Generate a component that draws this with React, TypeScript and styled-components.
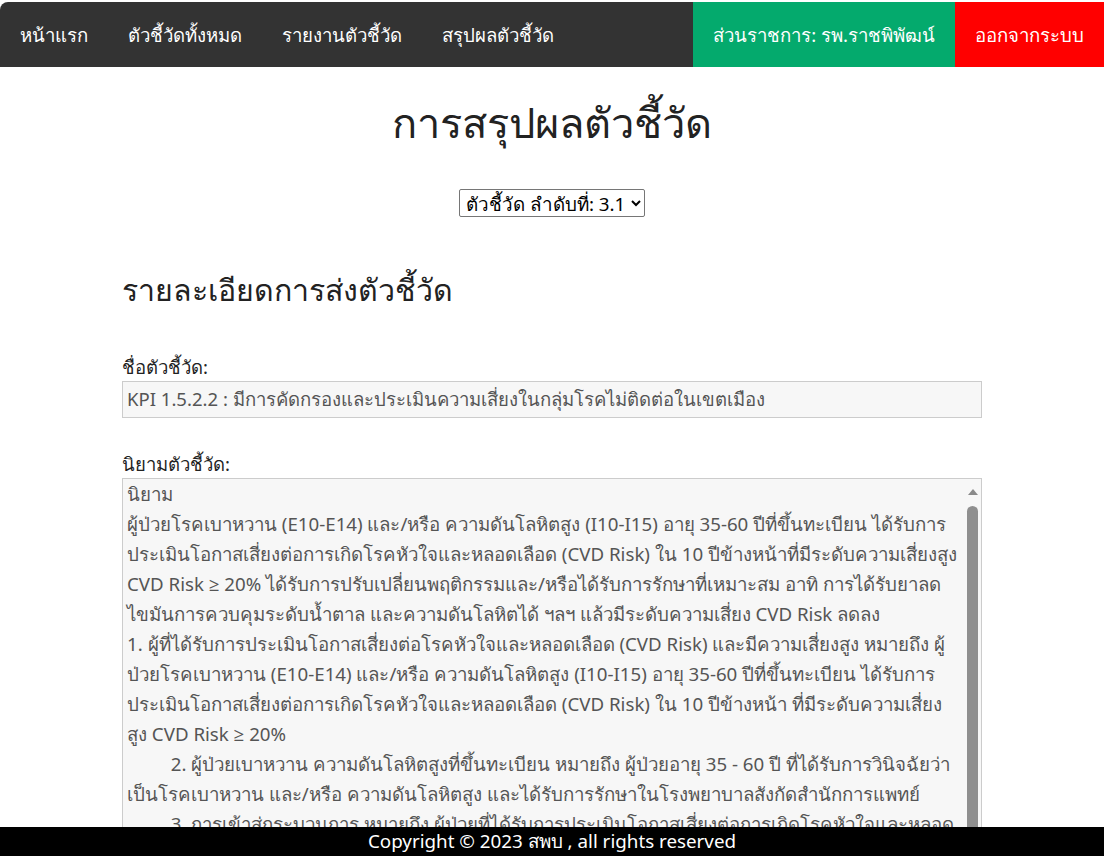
import React, { useState } from "react";
import styled, { createGlobalStyle } from "styled-components";

const GlobalStyle = createGlobalStyle`
  html, body { margin: 0; padding: 0; background: #fff; }
  body { font-family: "Noto Sans", "Open Sans", sans-serif; color: #222; }
`;

const Page = styled.div`
  padding-top: 2px; min-height: 100vh; box-sizing: border-box;
`;

const NavBar = styled.ul`
  list-style: none; margin: 0; padding: 0; display: flex; background: #333;
  border-top-left-radius: 8px; overflow: hidden;
`;

const NavItem = styled.li<{ $right?: boolean; $bg?: string }>`
  margin-left: ${({ $right }) => ($right ? "auto" : "0")};
  background: ${({ $bg }) => $bg || "transparent"};
  a {
    display: block; color: #fff; text-decoration: none; font-size: 18.6px;
    padding: 0 20px; line-height: 65px;
  }
`;

const Main = styled.main`
  width: 860px; margin: 0 auto; padding-bottom: 60px;
`;

const Title = styled.h1`
  text-align: center; font-size: 41.6px; font-weight: 400; margin: 28px 0 40px; line-height: 1.3;
`;

const SelectRow = styled.div`
  display: flex; justify-content: center; margin-bottom: 53px;
`;

const Picker = styled.select`
  font-family: inherit; font-size: 18.8px; color: #000; background: #fff;
  border: 1px solid #767676; border-radius: 2px; padding: 0 2px; height: 28px;
`;

const Heading = styled.h2`
  font-size: 30.3px; font-weight: 400; margin: 0 0 46px; line-height: 1.3;
`;

const Label = styled.label`
  display: block; font-size: 18.5px; line-height: 24px; margin-bottom: 2px;
`;

const Field = styled.input`
  display: block; width: 100%; box-sizing: border-box; height: 37px;
  font-family: inherit; font-size: 18.55px; color: #555; background: #f7f7f7;
  border: 1px solid #ccc; padding: 0 4px; margin-bottom: 34px;
`;

const AreaBox = styled.div`
  position: relative;
`;

const Area = styled.textarea`
  display: block; width: 100%; box-sizing: border-box; height: 430px; resize: none;
  font-family: inherit; font-size: 18.7px; line-height: 30px;
  color: #555; background: #f7f7f7;
  border: 1px solid #ccc; padding: 0 20px 0 4px; tab-size: 9; overflow: hidden;
`;

const ScrollTrack = styled.div`
  position: absolute; top: 1px; bottom: 1px; right: 1px; width: 17px;
  display: flex; flex-direction: column; align-items: center; background: #f7f7f7;
`;

const ScrollArrow = styled.div`
  width: 0; height: 0; margin: 10px 0 11px;
  border-left: 5px solid transparent; border-right: 5px solid transparent;
  border-bottom: 6px solid #8a8a8a;
`;

const ScrollThumb = styled.div`
  width: 11px; flex: 1; margin-bottom: 20px; border-radius: 6px; background: #8f8f8f;
`;

const Footer = styled.footer`
  position: fixed; left: 0; right: 0; bottom: 0; height: 29px; background: #000;
  color: #fff; font-size: 18.8px; line-height: 29px; text-align: center;
`;

const definition = `นิยาม
ผู้ป่วยโรคเบาหวาน (E10-E14) และ/หรือ ความดันโลหิตสูง (I10-I15) อายุ 35-60 ปีที่ขึ้นทะเบียน ได้รับการประเมินโอกาสเสี่ยงต่อการเกิดโรคหัวใจและหลอดเลือด (CVD Risk) ใน 10 ปีข้างหน้าที่มีระดับความเสี่ยงสูง CVD Risk ≥ 20% ได้รับการปรับเปลี่ยนพฤติกรรมและ/หรือได้รับการรักษาที่เหมาะสม อาทิ การได้รับยาลดไขมันการควบคุมระดับน้ำตาล และความดันโลหิตได้ ฯลฯ แล้วมีระดับความเสี่ยง CVD Risk ลดลง
1. ผู้ที่ได้รับการประเมินโอกาสเสี่ยงต่อโรคหัวใจและหลอดเลือด (CVD Risk) และมีความเสี่ยงสูง หมายถึง ผู้ป่วยโรคเบาหวาน (E10-E14) และ/หรือ ความดันโลหิตสูง (I10-I15) อายุ 35-60 ปีที่ขึ้นทะเบียน ได้รับการประเมินโอกาสเสี่ยงต่อการเกิดโรคหัวใจและหลอดเลือด (CVD Risk) ใน 10 ปีข้างหน้า ที่มีระดับความเสี่ยงสูง CVD Risk ≥ 20%
\t2. ผู้ป่วยเบาหวาน ความดันโลหิตสูงที่ขึ้นทะเบียน หมายถึง ผู้ป่วยอายุ 35 - 60 ปี ที่ได้รับการวินิจฉัยว่าเป็นโรคเบาหวาน และ/หรือ ความดันโลหิตสูง และได้รับการรักษาในโรงพยาบาลสังกัดสำนักการแพทย์
\t3. การเข้าสู่กระบวนการ หมายถึง ผู้ป่วยที่ได้รับการประเมินโอกาสเสี่ยงต่อการเกิดโรคหัวใจและหลอดเลือด (CVD Risk) และมีความเสี่ยงสูง ได้รับการปรับเปลี่ยนพฤติกรรม`;

export default function App() {
  const [kpi, setKpi] = useState("3.1");

  return (
    <Page>
      <GlobalStyle />
      <NavBar>
        <NavItem><a href="#">หน้าแรก</a></NavItem>
        <NavItem><a href="#">ตัวชี้วัดทั้งหมด</a></NavItem>
        <NavItem><a href="#">รายงานตัวชี้วัด</a></NavItem>
        <NavItem><a href="#">สรุปผลตัวชี้วัด</a></NavItem>
        <NavItem $right $bg="#04AA6D"><a href="#">ส่วนราชการ: รพ.ราชพิพัฒน์</a></NavItem>
        <NavItem $bg="#ff0000"><a href="#">ออกจากระบบ</a></NavItem>
      </NavBar>
      <Main>
        <Title>การสรุปผลตัวชี้วัด</Title>
        <SelectRow>
          <Picker value={kpi} onChange={e => setKpi(e.target.value)}>
            <option value="3.1">ตัวชี้วัด ลำดับที่: 3.1</option>
            <option value="3.2">ตัวชี้วัด ลำดับที่: 3.2</option>
          </Picker>
        </SelectRow>
        <Heading>รายละเอียดการส่งตัวชี้วัด</Heading>
        <Label htmlFor="kpiName">ชื่อตัวชี้วัด:</Label>
        <Field id="kpiName" readOnly value="KPI 1.5.2.2 : มีการคัดกรองและประเมินความเสี่ยงในกลุ่มโรคไม่ติดต่อในเขตเมือง" />
        <Label htmlFor="kpiDef">นิยามตัวชี้วัด:</Label>
        <AreaBox>
          <Area id="kpiDef" readOnly value={definition} />
          <ScrollTrack>
            <ScrollArrow />
            <ScrollThumb />
          </ScrollTrack>
        </AreaBox>
      </Main>
      <Footer>Copyright © 2023 สพบ , all rights reserved</Footer>
    </Page>
  );
}
